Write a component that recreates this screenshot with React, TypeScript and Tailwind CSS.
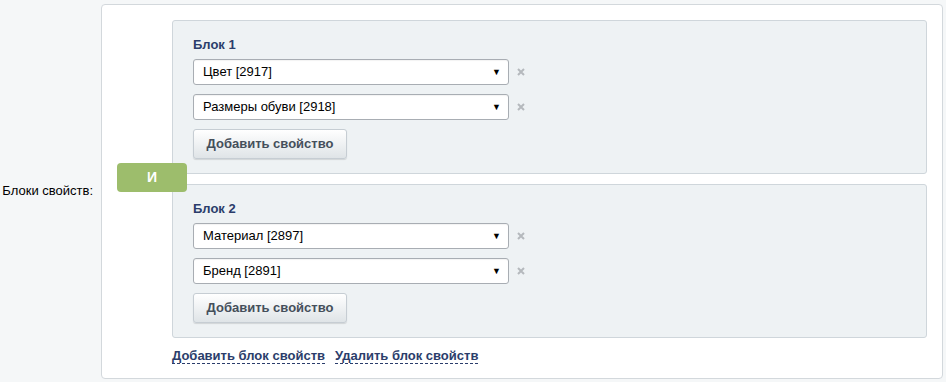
import React from "react";

const font = { fontFamily: '"Liberation Sans", Arial, sans-serif' };

function SelectRow({ label }: { label: string }) {
  return (
    <div className="flex items-center">
      <div className="relative flex h-[26px] w-[316px] items-center rounded-[3px] border border-[#a8adb3] bg-white pl-[9px] text-[13px] text-black shadow-[inset_0_1px_1px_rgba(0,0,0,0.05)]">
        <span>{label}</span>
        <span className="absolute right-[7px] top-[7px] text-[9px] leading-[10px] text-black">▼</span>
      </div>
      <svg className="ml-[8px]" width="8" height="8" viewBox="0 0 8 8">
        <path d="M1 1 L7 7 M7 1 L1 7" stroke="#b5b9bd" strokeWidth="2" />
      </svg>
    </div>
  );
}

function Block({ title, items }: { title: string; items: string[] }) {
  return (
    <div className="rounded-[3px] border border-[#cfd6db] bg-[#eef2f4] pb-[14px] pl-[20px] pt-[16px]">
      <div className="text-[13px] font-bold leading-[16px] text-[#2b3d6b]">{title}</div>
      <div className="mt-[6px] flex flex-col gap-[9px]">
        {items.map((i) => (
          <SelectRow key={i} label={i} />
        ))}
        <button className="flex h-[30px] w-[154px] items-center justify-center rounded-[3px] border border-[#c6cdd3] bg-gradient-to-b from-[#ffffff] to-[#dfe4e7] text-[13px] font-bold text-[#454f5b] shadow-[0_1px_1px_rgba(0,0,0,0.12)]">
          Добавить свойство
        </button>
      </div>
    </div>
  );
}

export default function App() {
  return (
    <div className="flex h-[382px] w-[946px] items-center bg-[#f5f7f8]" style={font}>
      <div className="w-[101px] pr-[8px] text-right text-[13px] text-[#000]">Блоки свойств:</div>
      <div className="relative h-[375px] w-[842px] rounded-[4px] border border-[#d3d8dc] bg-white pl-[70px] pr-[15px] pt-[15px]">
        <Block title="Блок 1" items={["Цвет [2917]", "Размеры обуви [2918]"]} />
        <div className="h-[10px]" />
        <Block title="Блок 2" items={["Материал [2897]", "Бренд [2891]"]} />
        <div className="mt-[10px] flex gap-[10px] text-[13px] font-bold text-[#2b3d6b]">
          <span className="border-b border-dashed border-[#2b3d6b] leading-[15px]">Добавить блок свойств</span>
          <span className="border-b border-dashed border-[#2b3d6b] leading-[15px]">Удалить блок свойств</span>
        </div>
        <div className="absolute left-[15px] top-[158px] flex h-[29px] w-[70px] items-center justify-center rounded-[4px] bg-[#9dbd6c] text-[14px] font-bold text-white">
          И
        </div>
      </div>
    </div>
  );
}
